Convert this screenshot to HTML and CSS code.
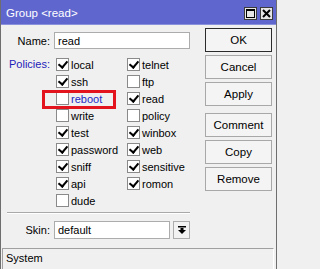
FILE: index.html
```html
<!DOCTYPE html>
<html>
<head>
<meta charset="utf-8">
<link rel="stylesheet" href="styles.css">
</head>
<body>
<div class="window">
  <div class="titlebar">
    <span class="title">Group &lt;read&gt;</span>
    <div class="tb-buttons">
      <span class="tb-btn"><svg width="9" height="9" viewBox="0 0 9 9"><rect x="0.5" y="0.5" width="8" height="8" fill="none" stroke="#000" stroke-width="1"/><rect x="0" y="0" width="9" height="2" fill="#000"/></svg></span>
      <span class="tb-btn"><svg width="9" height="9" viewBox="0 0 9 9"><path d="M1 1 L8 8 M8 1 L1 8" stroke="#000" stroke-width="2"/></svg></span>
    </div>
  </div>
  <div class="content">
    <div class="form">
      <div class="row name-row">
        <span class="lbl">Name:</span>
        <div class="input name-input">read</div>
      </div>
      <div class="policies">
        <span class="lbl pol-lbl">Policies:</span>
        <div class="checks">
          <div class="chk"><span class="box on"></span><span class="ctext">local</span></div>
          <div class="chk"><span class="box on"></span><span class="ctext">telnet</span></div>
          <div class="chk"><span class="box on"></span><span class="ctext">ssh</span></div>
          <div class="chk"><span class="box"></span><span class="ctext">ftp</span></div>
          <div class="chk"><span class="box"></span><span class="ctext blue">reboot</span></div>
          <div class="chk"><span class="box on"></span><span class="ctext">read</span></div>
          <div class="chk"><span class="box"></span><span class="ctext">write</span></div>
          <div class="chk"><span class="box"></span><span class="ctext">policy</span></div>
          <div class="chk"><span class="box on"></span><span class="ctext">test</span></div>
          <div class="chk"><span class="box on"></span><span class="ctext">winbox</span></div>
          <div class="chk"><span class="box on"></span><span class="ctext">password</span></div>
          <div class="chk"><span class="box on"></span><span class="ctext">web</span></div>
          <div class="chk"><span class="box on"></span><span class="ctext">sniff</span></div>
          <div class="chk"><span class="box on"></span><span class="ctext">sensitive</span></div>
          <div class="chk"><span class="box on"></span><span class="ctext">api</span></div>
          <div class="chk"><span class="box on"></span><span class="ctext">romon</span></div>
          <div class="chk"><span class="box"></span><span class="ctext">dude</span></div>
        </div>
      </div>
      <div class="sep"></div>
      <div class="row skin-row">
        <span class="lbl">Skin:</span>
        <div class="input skin-input">default</div>
        <div class="dd-btn"><svg width="8" height="8" viewBox="0 0 8 8"><rect x="0" y="0" width="8" height="1.5" fill="#000"/><rect x="2.5" y="2" width="3" height="2" fill="#000"/><path d="M0 4 L8 4 L4 8 Z" fill="#000"/></svg></div>
      </div>
    </div>
    <div class="buttons">
      <div class="btn default">OK</div>
      <div class="btn">Cancel</div>
      <div class="btn">Apply</div>
      <div class="btn gap">Comment</div>
      <div class="btn">Copy</div>
      <div class="btn">Remove</div>
    </div>
  </div>
  <div class="statusbar"><div class="status-box">System</div></div>
  <div class="highlight"></div>
</div>
</body>
</html>
```
FILE: styles.css
```css
* { box-sizing: border-box; }
html, body { margin: 0; padding: 0; background: #f0f0f0; }
body {
  font-family: "Liberation Sans", Arial, sans-serif;
  font-size: 11px;
  color: #000;
}
.window {
  position: relative;
  width: 277px;
  height: 269px;
  background: #f0f0f0;
  border-left: 1px solid #6e6e6e;
  border-right: 1px solid #6e6e6e;
  overflow: hidden;
}
.titlebar {
  height: 25px;
  background: #5f67cf;
  border-bottom: 1px solid #8a90dc;
  display: flex;
  align-items: center;
  justify-content: space-between;
  padding: 0 3px 0 5px;
}
.title { color: #fff; font-size: 11.5px; margin-top: 2px; }
.tb-buttons { display: flex; gap: 3px; margin-top: 2px; }
.tb-btn {
  width: 13px; height: 13px;
  background: #e6e6e6;
  border: 1px solid #3c3c3c;
  display: flex; align-items: center; justify-content: center;
}
.tb-btn svg { display: block; }
.content {
  height: 223px;
  display: flex;
  gap: 15px;
}
.form { width: 189px; display: flex; flex-direction: column; }
.row { display: flex; align-items: center; }
.lbl { width: 49px; text-align: right; flex: none; }
.name-row { margin-top: 7px; height: 17px; }
.input {
  background: #fff;
  border: 1px solid #acacac;
  height: 100%;
  display: flex;
  align-items: center;
  padding-left: 3px;
  margin-left: 4px;
}
.name-input { width: 136px; }
.policies { margin-top: 7px; display: flex; align-items: flex-start; }
.pol-lbl { color: #1e22b8; height: 17px; line-height: 17px; }
.checks {
  margin-left: 6px;
  display: grid;
  grid-template-columns: 71px 63px;
  grid-auto-rows: 17px;
}
.chk { display: flex; align-items: center; }
.box {
  width: 13px; height: 13px;
  background: #fff;
  border: 1px solid #8a8a8a;
  flex: none;
  position: relative;
}
.box.on::after {
  content: "";
  position: absolute;
  left: 3px; top: 0px;
  width: 4px; height: 7px;
  border-right: 2px solid #000;
  border-bottom: 2px solid #000;
  transform: rotate(40deg);
}
.ctext { margin-left: 2px; }
.blue { color: #2228c4; }
.sep {
  margin-top: 3px;
  height: 2px;
  border-top: 1px solid #a9a9a9;
  border-bottom: 1px solid #fff;
  margin-left: 6px;
}
.skin-row { margin-top: 7px; height: 18px; }
.skin-input { width: 116px; }
.dd-btn {
  margin-left: 3px;
  width: 17px; height: 18px;
  background: #f2f2f2;
  border: 1px solid #acacac;
  display: flex; align-items: center; justify-content: center;
}
.buttons { width: 67px; padding-top: 3px; display: flex; flex-direction: column; gap: 3px; }
.btn {
  height: 24px;
  border: 1px solid #a8a8a8;
  background: #f4f4f4;
  display: flex; align-items: center; justify-content: center;
  font-size: 11.5px;
}
.btn.default { border-color: #2b2b2b; }
.btn.gap { margin-top: 4px; }
.statusbar { height: 21px; padding: 0 2px 0 1px; }
.status-box {
  height: 100%;
  border-top: 1px solid #a0a0a0;
  border-left: 1px solid #a0a0a0;
  border-right: 1px solid #fff;
  padding: 3px 0 0 3px;
}
.highlight {
  position: absolute;
  left: 41px; top: 90px;
  width: 74px; height: 19px;
  border: 3px solid #e4141e;
}
```
